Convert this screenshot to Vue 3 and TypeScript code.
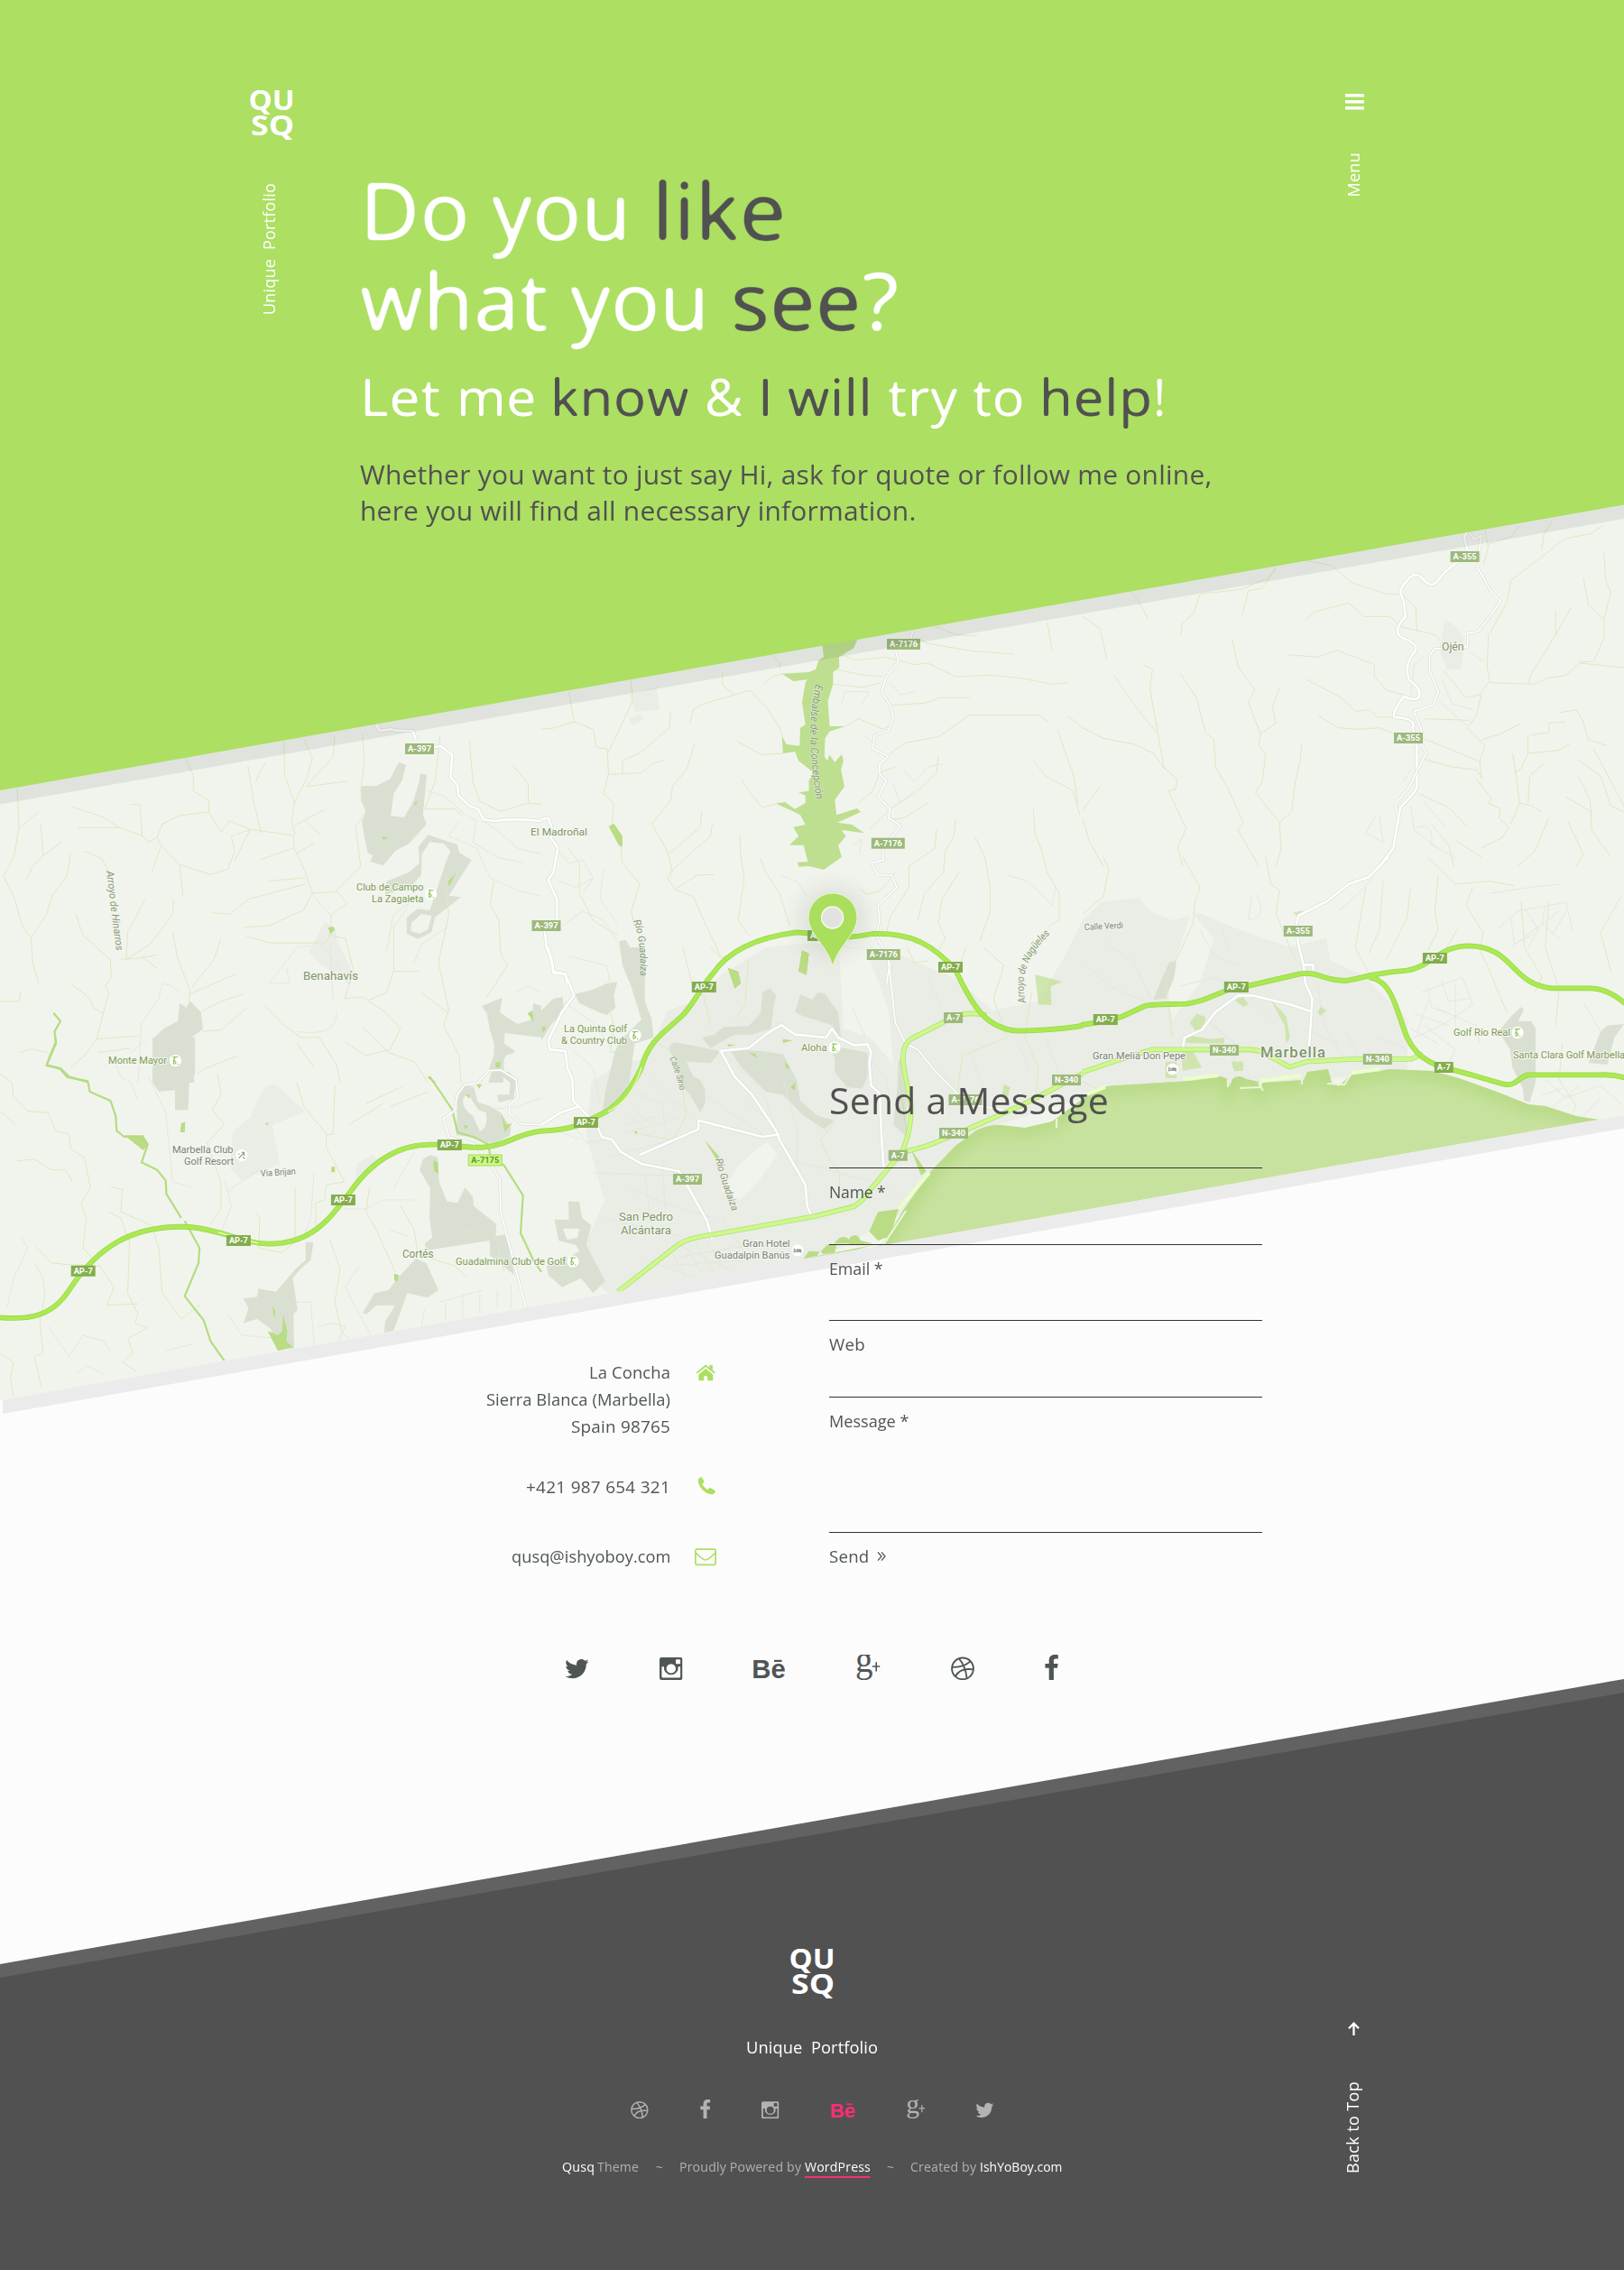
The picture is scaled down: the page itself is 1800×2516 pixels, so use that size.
<script setup lang="ts">
type Word = { t: string; w: number; dark?: boolean }
type Badge = { x: number; y: number; t: string; kind: 'major' | 'minor' | 'pale' }
type Label = { x: number; y: number; w: number; t: string; s?: number; r?: number; c?: string }

// Fills the given measure with a run of text: part tracking, part glyph width.
const vFit = {
  mounted(el: HTMLElement, binding: { value: number }) {
    const box = el.getBoundingClientRect()
    const upright = el.classList.contains('upright')
    const natural = upright ? box.height : box.width
    const count = (el.textContent ?? '').length
    const delta = binding.value - natural
    if (upright) {
      el.style.letterSpacing = `${(delta / count).toFixed(3)}px`
      return
    }
    const tracked = natural + delta * 0.35
    el.style.letterSpacing = `${((delta * 0.35) / count).toFixed(3)}px`
    el.style.transform = `scaleX(${(binding.value / tracked).toFixed(4)})`
    el.style.marginRight = `${(binding.value - tracked).toFixed(2)}px`
  },
}

const headline: Word[][] = [
  [{ t: 'Do ', w: 146.5 }, { t: 'you ', w: 178 }, { t: 'like', w: 149, dark: true }],
  [{ t: 'what ', w: 233.5 }, { t: 'you ', w: 178 }, { t: 'see', w: 145, dark: true }, { t: '?', w: 43 }],
]
const subline: Word[] = [
  { t: 'Let ', w: 106.5 }, { t: 'me ', w: 105 }, { t: 'know ', w: 171, dark: true }, { t: '& ', w: 58.5 },
  { t: 'I ', w: 33.5, dark: true }, { t: 'will ', w: 110.5, dark: true }, { t: 'try ', w: 94 },
  { t: 'to ', w: 74, dark: false }, { t: 'help', w: 126, dark: true }, { t: '!', w: 14 },
]

const fields = [
  { t: 'Name *', w: 62.5, h: 85 },
  { t: 'Email *', w: 59.5, h: 84 },
  { t: 'Web', w: 40, h: 85 },
  { t: 'Message *', w: 88.5, h: 150 },
]

const social = ['twitter', 'instagram', 'behance', 'gplus', 'dribbble', 'facebook']
const footerSocial = ['dribbble', 'facebook', 'instagram', 'behance', 'gplus', 'twitter']
const iconBox: Record<string, number> = {
  twitter: 25.5, instagram: 25.5, behance: 35, gplus: 26.5, dribbble: 26, facebook: 15,
}

const badges: Badge[] = [
  { x: 465, y: 830, t: 'A-397', kind: 'minor' }, { x: 605.5, y: 1026, t: 'A-397', kind: 'minor' },
  { x: 762, y: 1307, t: 'A-397', kind: 'minor' }, { x: 1001.5, y: 714, t: 'A-7176', kind: 'minor' },
  { x: 984.3, y: 934.7, t: 'A-7176', kind: 'minor' }, { x: 979.3, y: 1058, t: 'A-7176', kind: 'minor' },
  { x: 1070, y: 1219, t: 'A-7176', kind: 'minor' }, { x: 92.2, y: 1408.7, t: 'AP-7', kind: 'major' },
  { x: 264.4, y: 1375, t: 'AP-7', kind: 'major' }, { x: 380.4, y: 1330, t: 'AP-7', kind: 'major' },
  { x: 498.3, y: 1269, t: 'AP-7', kind: 'major' }, { x: 908.5, y: 1037, t: 'AP-7', kind: 'major' },
  { x: 1053.5, y: 1072, t: 'AP-7', kind: 'major' }, { x: 780.3, y: 1094, t: 'AP-7', kind: 'major' },
  { x: 649.4, y: 1244, t: 'AP-7', kind: 'major' }, { x: 1225.3, y: 1130, t: 'AP-7', kind: 'major' },
  { x: 1370.3, y: 1094, t: 'AP-7', kind: 'major' }, { x: 1590.4, y: 1062, t: 'AP-7', kind: 'major' },
  { x: 1056.6, y: 1128, t: 'A-7', kind: 'minor' }, { x: 995.3, y: 1280.7, t: 'A-7', kind: 'minor' },
  { x: 1600.3, y: 1183, t: 'A-7', kind: 'major' }, { x: 1182, y: 1197, t: 'N-340', kind: 'minor' },
  { x: 1057, y: 1256, t: 'N-340', kind: 'minor' }, { x: 1357, y: 1164, t: 'N-340', kind: 'minor' },
  { x: 1526.8, y: 1174, t: 'N-340', kind: 'minor' }, { x: 1623.6, y: 617, t: 'A-355', kind: 'minor' },
  { x: 1561, y: 818, t: 'A-355', kind: 'minor' }, { x: 1438.8, y: 1032, t: 'A-355', kind: 'minor' },
  { x: 537.7, y: 1286, t: 'A-7175', kind: 'pale' },
]
const badgeWidth = (t: string) => ({ 3: 21, 4: 27, 5: 32, 6: 37 } as Record<number, number>)[t.length]

const labels: Label[] = [
  { x: 588, y: 926, w: 63, t: 'El Madroñal' },
  { x: 336, y: 1085.7, w: 61, t: 'Benahavís', s: 13 },
  { x: 395, y: 986.7, w: 74.5, t: 'Club de Campo', c: 'olive' },
  { x: 412, y: 1000, w: 57.5, t: 'La Zagaleta', c: 'olive' },
  { x: 120, y: 1179.3, w: 65, t: 'Monte Mayor', c: 'olive' },
  { x: 191, y: 1278, w: 67.5, t: 'Marbella Club', c: 'grey' },
  { x: 204, y: 1291, w: 55, t: 'Golf Resort', c: 'grey' },
  { x: 289, y: 1304, w: 39, t: 'Via Brijan', s: 10, r: -4, c: 'grey' },
  { x: 446, y: 1394, w: 34.5, t: 'Cortés', s: 12.5 },
  { x: 505, y: 1401.7, w: 122, t: 'Guadalmina Club de Golf', c: 'olive' },
  { x: 686, y: 1352.7, w: 60, t: 'San Pedro', s: 13 },
  { x: 688, y: 1367.7, w: 56, t: 'Alcántara', s: 13 },
  { x: 823, y: 1381.7, w: 52.5, t: 'Gran Hotel', c: 'grey' },
  { x: 792, y: 1395, w: 83.5, t: 'Guadalpín Banús', c: 'grey' },
  { x: 625, y: 1144, w: 70, t: 'La Quinta Golf', c: 'olive' },
  { x: 622, y: 1157, w: 73, t: '& Country Club', c: 'olive' },
  { x: 888, y: 1165, w: 28.5, t: 'Aloha', c: 'olive' },
  { x: 1598, y: 720.7, w: 24.5, t: 'Ojén', s: 12.5 },
  { x: 1202, y: 1031, w: 43, t: 'Calle Verdi', s: 10, r: -3, c: 'grey' },
  { x: 1211, y: 1173.7, w: 103, t: 'Gran Meliá Don Pepe', c: 'grey' },
  { x: 1397, y: 1171.7, w: 73, t: 'Marbella', s: 16.5, c: 'city' },
  { x: 1611, y: 1147.7, w: 63, t: 'Golf Río Real', c: 'olive' },
  { x: 1677, y: 1172.7, w: 124, t: 'Santa Clara Golf Marbella', c: 'olive' },
]
const curved = [
  { id: 'hin', d: 'M118 966 Q122 1000 130 1062', t: 'Arroyo de Hinarros', w: 89, s: 11.5 },
  { id: 'emb', d: 'M904 758 C895 800 897 840 906 892', t: 'Embalse de la Concepción', w: 129, s: 12 },
  { id: 'gua', d: 'M702 1021 Q712 1045 709 1090', t: 'Río Guadaiza', w: 62, s: 11 },
  { id: 'gub', d: 'M793 1285 Q801 1315 814 1349', t: 'Río Guadaiza', w: 61, s: 11 },
  { id: 'sir', d: 'M742 1173 Q750 1190 755 1215', t: 'Calle Sirio', w: 38, s: 10 },
  { id: 'nag', d: 'M1137 1111 C1130 1080 1139 1056 1169 1031', t: 'Arroyo de Nagüeles', w: 85, s: 11.5 },
]
const flags = [[477.6, 990.7], [194.4, 1175.5], [635, 1398], [704, 1147.5], [925, 1161], [1682, 1144.5]]
const hotels = [[884, 1386], [1299.5, 1185]]
</script>

<template>
  <div class="page">
    <svg class="defs" width="0" height="0" aria-hidden="true">
      <defs>
        <filter id="soften" x="-2%" y="-5%" width="104%" height="110%" color-interpolation-filters="sRGB">
          <feGaussianBlur stdDeviation="2" result="b" />
          <feComponentTransfer in="b"><feFuncA type="linear" slope="4.5" intercept="-1.6" /></feComponentTransfer>
        </filter>
        <filter id="soften-small" x="-2%" y="-5%" width="104%" height="110%" color-interpolation-filters="sRGB">
          <feGaussianBlur stdDeviation="1.2" result="b" />
          <feComponentTransfer in="b"><feFuncA type="linear" slope="3.2" intercept="-1" /></feComponentTransfer>
        </filter>
        <symbol id="twitter" viewBox="0 0 25.5 28">
          <path transform="translate(-.7 2.6) scale(1.09)" d="M23.954 4.569c-.885.389-1.83.654-2.825.775 1.014-.611 1.794-1.574 2.163-2.723-.951.555-2.005.959-3.127 1.184-.896-.959-2.173-1.559-3.591-1.559-2.717 0-4.92 2.203-4.92 4.917 0 .39.045.765.127 1.124C7.691 8.094 4.066 6.13 1.64 3.161c-.427.722-.666 1.561-.666 2.475 0 1.71.87 3.213 2.188 4.096-.807-.026-1.566-.248-2.228-.616v.061c0 2.385 1.693 4.374 3.946 4.827-.413.111-.849.171-1.296.171-.314 0-.615-.03-.916-.086.631 1.953 2.445 3.377 4.604 3.417-1.68 1.319-3.809 2.105-6.102 2.105-.39 0-.779-.023-1.17-.067 2.189 1.394 4.768 2.209 7.557 2.209 9.054 0 13.999-7.496 13.999-13.986 0-.209 0-.42-.015-.63.961-.689 1.8-1.56 2.46-2.548z" />
        </symbol>
        <symbol id="instagram" viewBox="0 0 25.5 28">
          <path fill-rule="evenodd" d="M2.2 3H23.3Q25.5 3 25.5 5.2V25.8Q25.5 28 23.3 28H2.2Q0 28 0 25.8V5.2Q0 3 2.2 3ZM2.4 13.2V24.6Q2.4 25.6 3.4 25.6H22.1Q23.1 25.6 23.1 24.6V13.2H20.6A7.9 7.9 0 1 1 5 13.2ZM12.8 10.2A5.2 5.2 0 1 0 12.8 20.6 5.2 5.2 0 1 0 12.8 10.2ZM18.8 5.2Q18 5.2 18 6V9.4Q18 10.2 18.8 10.2H22.3Q23.1 10.2 23.1 9.4V6Q23.1 5.2 22.3 5.2Z" />
        </symbol>
        <symbol id="behance" viewBox="0 0 35 28">
          <text x="-1.8" y="25.9" font-family="'Liberation Sans', sans-serif" font-weight="700" font-size="30" textLength="37.5" lengthAdjust="spacingAndGlyphs">Be</text>
          <rect x="23" y="5.8" width="8.6" height="2.2" />
        </symbol>
        <symbol id="gplus" viewBox="0 0 26.5 28">
          <text x="-1" y="19.4" font-family="'Liberation Serif', serif" font-size="40" textLength="19.5" lengthAdjust="spacingAndGlyphs">g</text>
          <path d="M17.8 12.2h8.8v1.6h-8.8zM21.4 8.3H23V18.6H21.4z" />
        </symbol>
        <symbol id="dribbble" viewBox="0 0 26 28">
          <g fill="none" stroke="currentColor" stroke-width="1.9">
            <circle cx="13" cy="15.4" r="11.9" />
            <path d="M9 4.6Q16 12 17.6 26M1.4 13.8Q14 14.4 21.5 7.4M5 24Q10 14.2 24.6 16.4" />
          </g>
        </symbol>
        <symbol id="facebook" viewBox="0 0 15 28">
          <path d="M14.8.2V4.6H12.2C10.3 4.6 9.9 5.5 9.9 6.9V9.9H14.6L14 14.7H9.9V28H4.7V14.7H.4V9.9H4.7V6.3C4.7 2.2 7.2 0 10.9 0 12.7 0 14.2.1 14.8.2Z" />
        </symbol>
      </defs>
    </svg>

    <svg class="backdrop" viewBox="0 0 1800 2516" aria-hidden="true">
      <defs>
        <clipPath id="mapclip"><path d="M0 800V1552L1800 1236V540Z" /></clipPath>
        <filter id="blur" x="-50%" y="-50%" width="200%" height="200%"><feGaussianBlur stdDeviation="13" /></filter>
        <filter id="inner"><feGaussianBlur stdDeviation="9" /></filter>
        <clipPath id="seaclip"><use href="#sea" /></clipPath>
        <path id="sea" d="M940 1400L979 1378 1002 1340 1032 1298 1059 1270 1082 1253Q1095 1246 1109 1247L1136 1250 1166 1243 1200 1218Q1218 1203 1238 1203L1320 1198 1353 1193 1361 1196 1363 1204 1366 1196Q1373 1190 1381 1196L1395 1199 1396 1206 1400 1200 1445 1197 1449 1188 1472 1185 1476 1200 1484 1204 1496 1192 1541 1185 1587 1187 1617 1195 1659 1210 1694 1224 1713 1226 1747 1237 1772 1241 1772 1300 1300 1420Z" />
      </defs>

      <g clip-path="url(#mapclip)">
        <rect y="540" width="1800" height="1020" fill="#f1f4ed" />

        <g class="urban">
          <path d="M650 1260L655 1200 690 1175 715 1175 740 1120 770 1110 800 1080 850 1050 900 1045 990 1055 1060 1085 1100 1120 1150 1110 1180 1060 1200 1020 1220 1000 1262 995 1275 1010 1300 1020 1330 1012 1360 1025 1400 1040 1430 1050 1470 1040 1475 1065 1510 1080 1560 1130 1560 1185 1440 1200 1240 1205 1080 1255 1000 1345 900 1400 690 1450 640 1400 670 1330Z" />
          <path d="M342 1055L360 1022 372 1030 374 1043 392 1080 388 1092 355 1068ZM290 1210Q302 1192 316 1212L338 1232 290 1252 277 1240ZM275 1240L300 1235 310 1290 268 1308 255 1295 258 1255ZM395 1290L412 1280 420 1286 394 1312Z" />
          <path d="M698 770L728 761 731 787 704 789ZM697 797L710 790 714 797 702 804ZM1602 687Q1612 690 1623 707L1620 742 1604 742 1595 720Z" />
        </g>
        <g fill="#f1f4ed">
          <path d="M820 1290L850 1265 862 1280 840 1310 820 1330 800 1320ZM930 1050L960 1052 985 1120 990 1180 965 1150 935 1140ZM1320 1010L1345 1040 1330 1090 1300 1130 1292 1100Z" />
        </g>

        <g class="golf">
          <g transform="translate(0 800) scale(.38265 .33333)">
            <path d="M1045 213L1090 213 1130 190 1155 135 1176 143 1165 195 1140 240 1132 312 1170 318 1197 265 1214 200 1217 172 1236 177 1225 310 1236 340 1185 405 1145 430 1110 478 1072 465 1080 445 1065 435 1055 380 1048 330 1060 300 1045 260Z" />
            <path fill-rule="evenodd" d="M1240 376L1325 408 1330 435 1366 460 1300 578 1335 583 1260 650 1250 700 1210 722 1178 705 1178 650 1210 622 1245 627 1295 455 1305 430 1285 405 1245 400 1222 440 1220 510 1190 548 1115 575 1120 530 1185 500 1215 470 1212 415ZM1250 645L1220 640 1192 668 1190 695 1215 705 1240 690Z" />
            <path d="M550 928L582 965 588 1022 554 1050 563 1200H442L448 1048 475 1020 515 995 520 935 540 950ZM1395 945L1455 917 1448 965 1470 985 1500 1005 1540 990 1545 935 1568 945V1050L1462 1035 1460 1070 1492 1095 1460 1110 1458 1200H1415L1440 1100 1420 1030 1410 970Z" />
          </g>
          <g transform="translate(0 1150) scale(.38265 .33333)">
            <path d="M442 0H565V120L548 150 545 240 507 242V175L460 180 442 150ZM705 868L745 862 748 835 800 845 855 770 885 740V680L908 680 900 740 870 770 848 800 862 905 850 920 852 1035 800 1030 785 970 745 935 705 950 720 900ZM1215 440L1225 405 1245 390 1268 398 1272 480 1295 545 1325 550 1347 498 1370 530 1372 560 1438 620 1436 660 1467 655 1490 790 1420 725 1418 675 1235 708 1230 685 1252 665 1244 600 1246 500ZM1050 915L1085 850 1125 840 1160 790 1205 735 1235 750 1270 840 1238 865 1180 850 1140 975 1113 982 1115 945 1145 890 1090 890 1062 920Z" />
            <path fill-rule="evenodd" d="M1325 210L1340 155 1372 165 1385 215 1420 228 1450 250 1480 300 1478 325 1430 355 1370 330 1322 325ZM1345 195Q1330 230 1370 260L1390 312Q1415 300 1408 250L1385 240 1360 195ZM1415 110L1475 115 1495 140 1488 205 1445 215 1440 190 1475 190 1478 150 1450 125Z" />
            <path d="M1432 0H1460L1462 30 1492 50 1465 60 1445 110 1415 110 1430 60Z" />
          </g>
          <g transform="translate(600 1050) scale(.38265 .33333)">
            <path d="M0 210L35 170 62 165 65 215 30 255 0 310ZM97 155L150 140 190 120 220 115 210 160 215 200 190 225 165 215 110 185ZM228 0H300L300 180 320 240 325 300 270 320 255 450 210 545 178 540 185 480 212 350 228 310 290 240 260 130 235 60ZM370 330L385 315 520 345 490 385 420 380 440 430 460 440 475 475V520L460 548 430 490 400 450 395 410ZM465 300L500 290 530 265 600 262 635 220 640 150 662 135 680 160 672 200 665 270 610 290 560 290 490 335ZM545 340L640 345 700 355 740 440 750 510 800 560 850 575 820 605 760 560 700 490 650 480 580 400ZM735 215L750 155 785 175 800 150 822 155 860 215 868 300 850 285 845 260 790 240 760 230ZM830 325L945 350 945 430 930 470 885 465 850 415 850 370ZM1035 370L1060 400 1058 630 1020 590 1030 480Z" />
            <path fill-rule="evenodd" d="M78 845L110 845 118 900 145 925 130 990 185 1110 150 1150 115 1100 60 1130 20 1090 15 1060 80 1030 110 1010 100 990 50 975 38 905 80 905ZM62 935L75 972 105 965 110 935Z" />
          </g>
          <g transform="translate(600 690) scale(.38265 .33333)">
            <path d="M225 1060L245 1055 270 1110 290 1130 300 1200H260L235 1130Z" />
          </g>
          <g transform="translate(1200 950) scale(.38265 .33333)">
            <path d="M250 350L272 345 265 400 240 470 205 475 220 430ZM1240 530L1270 498 1278 508 1262 545 1300 545 1312 570 1312 750 1295 815 1278 810 1275 770 1245 700 1238 640 1205 580ZM1500 580L1520 560 1568 555 1540 600 1520 690 1465 685Z" />
          </g>
        </g>

        <g class="streams">
          <g transform="translate(0 800) scale(.38265 .33333)">
            <path d="M50 225L55 350 40 450 10 515 40 580 65 680 90 720 95 800 112 870M55 355L110 300M118 340L125 445 95 480 75 530M125 445L178 400M204 438L195 510 150 580 135 640 90 718M210 283L300 318 345 352 410 378 430 400 455 385 470 340 520 312 605 300 605 262 560 230 560 180 535 110M225 352L345 352M378 275L405 275 412 380M455 385L467 412 520 475 610 508 660 490 680 430 670 380 725 358 680 460M467 412L440 500M520 475L530 580M605 300L640 365 665 330 725 358 850 378 852 420 885 500 905 570 978 565 1005 605 960 640 955 710 1000 720 1025 830 998 920M718 145L735 270 758 372M768 135L740 200M822 65L825 180 853 268 845 330 855 375M880 55L905 120 888 190 853 268M970 45L965 115 888 215 1005 198M853 345L940 292M885 330L928 375M860 438L910 402M755 458L850 420M778 530L885 518M615 635L665 640 720 590 800 565 885 540M708 683L780 678 880 625 905 570M712 712L780 735 895 735 945 735 955 710M1050 40L1055 140 1045 230 1060 300 1030 350 1045 480 975 560M1360 65L1370 200 1390 265 1450 298 1530 270 1568 275M1485 145L1530 205 1530 270M1275 45L1260 200 1230 290 1320 290 1340 315M245 430L295 455 320 510M220 640L240 710 320 790 322 850 305 880 315 900 280 1055 245 1110 205 1150M420 590L370 700 365 790 435 740 500 640 503 590M350 790L410 785 455 775M410 780L455 820M500 700L515 790 550 890 548 930M640 720L620 790 555 885M550 905L685 838M582 965L640 930 705 905M588 1030L640 1025 715 950M205 870L260 920 270 950 300 970M280 1055L400 1045M285 1100L380 1085M0 930L55 930 60 895M55 1100L90 1088 140 1100M768 945L825 1010 870 1050 925 1050 975 1140 985 1200M860 1070L910 1150M1050 1015L1125 1100 1200 1130 1240 1200M998 920L1050 915 1110 960 1160 1020 1130 1090 1060 1110 1000 1065M1140 830L1215 830M1180 620L1140 680 1140 830 1120 900 1070 925M1290 550L1300 640 1270 800 1300 960 1285 1010 1330 1110 1335 1200M1430 530L1420 610 1445 660 1450 770 1470 810 1410 915M1220 900L1300 970" />
          </g>
          <g transform="translate(0 1150) scale(.38265 .33333)">
            <path d="M0 120L35 150 38 195 80 245 140 250 160 310 200 320 205 370 245 400 262 500 235 550 250 600 240 700 280 750M0 245L45 290M50 410L100 405 150 440 190 440 210 480M315 580L350 600 375 680 370 850 400 920 390 950 430 965 370 1000 385 1050 355 1080 395 1110M103 755L125 800 130 860 115 940 125 1050 100 1060 120 1165M102 695L150 750 200 755 290 760 330 830 310 890 400 885M320 495L355 505 350 580 440 625 460 700 470 850 525 935 580 890M630 120L640 190 615 240 650 290 600 350 640 480 640 570 610 620M860 150L880 230 945 320 945 365 998 480 945 490 940 540 915 550V630M970 160L965 320 945 325M690 60L600 100 570 120M0 1050L40 1080 30 1130 40 1195M740 580L752 600 750 700 815 715 855 680 855 500M955 670L985 770 970 880 990 980 1010 1000M1070 500L1060 580 1090 640 1145 780M1160 560L1200 640 1210 720 1320 760 1355 800M1130 230L1240 180M1060 220L1170 160M1010 290L1110 220" />
          </g>
          <g transform="translate(600 690) scale(.38265 .33333)">
            <path d="M0 355L40 350 95 330 150 355 160 415 190 420 195 500 180 570 210 600 205 670M80 230L95 330M260 190L265 260 240 320 220 370 190 440M525 165V210L560 240 605 225 650 280 690 350 700 380M560 240L470 270 440 290 430 335M445 400L420 490 380 545 375 590 320 670 365 760 380 830 365 850 390 890 440 910 470 990 520 1110M465 630L460 680 370 770M495 670L490 710 420 780 370 835M500 838L450 840 390 885M375 295L370 350 290 430 235 460V500M355 458L320 470 290 500 195 505M567 395L640 440 700 435M580 520L600 560 640 615 690 600M575 705L578 780 588 850 570 990 600 1040M635 785L650 830 690 900 720 1010M230 745L235 800 285 870 260 960 270 1010M75 745L110 800 110 900 150 990 220 1040M865 105L910 125 1000 115 1080 140 1120 135 1200 180 1300 175 1390 185 1480 205 1525 200M1085 50L1120 70 1250 95 1370 105M850 155L935 175 990 180M845 205L930 215 985 200M1010 275L1110 268 1155 250 1240 250M880 345L920 320 990 355 1010 340M1010 435L1055 400 1150 380 1200 340 1240 308 1440 308 1468 330M1425 460L1460 510 1540 560 1560 640M1495 355L1520 440 1540 500 1555 600M1425 620L1430 700 1450 760 1465 830 1500 900V990L1470 1010M1255 710L1285 780 1300 880 1300 960 1270 1060M1200 655L1195 710 1170 760 1165 830 1110 900 1090 990M1145 685L1140 750 1065 810 1065 880 1010 980 1000 1030M1210 830L1160 920 1150 1000 1170 1050 1150 1090M925 885L940 905 985 890 1025 830M1025 480L980 500 960 560 920 600M1150 445L1145 500 1080 570 1010 620 950 690M1120 600L1050 650 1010 655M1465 0L1480 95M1135 10L1200 40 1260 45M665 100L690 135 690 155M645 205L670 180 700 170M1525 310L1568 350" />
          </g>
          <g transform="translate(600 1050) scale(.38265 .33333)">
            <path d="M410 0L440 140 470 160 490 260M490 0L520 35 560 20M560 240L590 190 600 40M190 170L210 260 200 350 270 330M340 320L370 340 400 400 420 560 380 640 280 620M850 580L810 640 830 700 865 750 860 830M1060 0L1080 50 1120 45M1200 100L1230 0M1280 0L1340 60 1310 170 1350 300 1220 360 1205 480M1420 150L1400 300 1440 400 1430 520" />
          </g>
          <g transform="translate(1200 540) scale(.38265 .33333)">
            <path d="M0 430L50 470 70 570M135 345L160 375 190 440M285 490L288 455 320 420 340 355 460 340 540 300 560 265M462 425L480 345 520 335 560 270M650 245L720 260 780 318 880 355 920 355M645 442L670 415 770 385 815 430 890 430 925 465 1020 490 1035 510M595 557L680 565 735 542 790 565 845 590 845 630 880 675 930 690M645 638L750 700 790 745 830 740 855 765 900 765M683 760L740 800 800 805 860 800 910 825M433 505L450 595 498 675 480 715 515 820 510 860 530 890 520 980 500 1015 570 1115 575 1200 560 1260M570 665L550 730 560 785 515 820M635 850L630 910 615 985 605 1080 570 1115M283 620L330 700 355 815 380 840 385 930 420 1000 465 1115 450 1140 510 1260M175 590L202 605 195 670 215 800 235 930 272 970 270 1005 248 1010 300 1135 275 1200 290 1260M90 625L160 740 215 815M0 800L60 835 150 855 205 885 240 940M0 1075L50 995M0 1100L20 1180 60 1260M930 360L965 400 968 480M1045 610L1110 700 1150 690 1175 650M1175 490L1172 600 1180 650 1310 655 1345 635 1400 625 1440 585 1568 600M1290 650L1300 620 1365 500 1415 400M1370 410V490M1180 485L1230 380 1240 310 1320 240 1400 170 1470 155 1510 125M1330 210L1335 160 1360 110M1165 140L1175 200 1160 260M1175 190L1240 165 1265 130M1155 690L1140 760 1115 800 1165 860 1150 910 1155 970M1155 840L1210 820 1270 785M985 835L1040 860 1145 910M1140 970L1185 1035 1175 1050 1210 1070 1205 1100 1235 1130 1215 1165 1155 1200M990 905L1070 930 1140 940 1160 970M1120 775L990 770M1245 885L1255 950 1265 1050 1300 1060 1330 1080M1290 1050L1295 960 1335 920M1240 1120L1265 1050M1290 825L1290 885 1270 935 1250 950M1295 825L1350 815 1350 785 1400 780M1290 885L1380 875 1410 855M1380 750L1430 740 1450 780 1465 840 1520 860M1450 300L1465 390 1510 440 1510 500 1480 580 1440 580M1510 215L1515 310 1530 350 1510 440M1435 905L1500 960 1530 1060 1568 1080M1435 960L1470 1040 1475 1140 1530 1230M1400 1030L1475 1080M1405 1110L1450 1220 1430 1260M1010 1120L1060 1190 1075 1260M975 1020L1060 1065 1115 1130M1080 1175L1155 1230M1350 1100L1310 1210 1260 1260M1480 870L1540 1000 1568 1060" />
          </g>
          <g transform="translate(1200 950) scale(.38265 .33333)">
            <path d="M60 0L75 40 60 130 0 190M290 0L340 100 325 150 320 220 280 320 240 400 260 600M530 0L545 90 570 110 560 190 600 300 620 350M820 100L790 300 830 390M870 80L860 240 830 320M950 100L940 200 880 340M1030 60L1020 180 1030 240 1000 310M1085 240L1040 330M1130 100L1110 160 1160 250 1150 310 1180 380 1200 440 1230 520M1270 150L1280 300 1330 400 1310 450M1350 150L1340 300 1380 440 1370 560M1560 130L1500 250 1530 380" />
            <path d="M1000 0L1080 90 1180 80 1250 95M1390 620L1380 740 1430 830 1420 850M0 745L40 770" />
          </g>
        </g>

        <g class="lanes">
          <g transform="translate(0 800) scale(.38265 .33333)">
            <path d="M905 575L955 640M955 740L965 930M930 740L990 830M780 870L860 750 900 745M830 820L840 870 780 870M1240 230L1290 250 1350 310 1380 330 1370 400 1440 450 1520 470M1330 330L1300 380 1380 420 1420 520 1500 560 1568 580M1400 330L1450 370 1500 420 1568 440M1120 760L1140 640 1190 600M1200 800L1220 740 1300 680M1490 900L1530 880 1568 900M400 1200L410 1000 460 920 470 870 500 880 520 900M380 1100L420 1060M860 1030Q980 1050 975 960" />
          </g>
          <g transform="translate(0 1150) scale(.38265 .33333)">
            <path d="M300 100L330 70 350 130 380 150 400 210M430 130L480 250 500 480 560 500M650 470L670 560 640 650M660 510L750 440M910 450L900 600 880 660M140 960L200 1060 240 990 300 1010 320 1040M220 1120L250 1090 300 1120M660 920L700 990 800 1000M480 1040L560 1020M860 880L900 880 910 1020M920 960L960 950 1000 960 960 1070M1000 570L1060 570 1110 540 1200 540M1130 640L1180 660M1400 240L1500 230 1568 200M1040 760L1000 830 1030 900 1080 1000M1300 600L1380 660M1200 380L1160 460 1140 500M1440 690L1460 780M20 900L40 800 80 700 60 660M1270 880L1400 840M1290 940L1290 880M1340 930L1340 850M1390 920V850M1440 900V840M1220 960L1230 900M1480 900V820" />
          </g>
          <g transform="translate(600 690) scale(.38265 .33333)">
            <path d="M870 270L880 230 950 230 930 270M1010 200L1040 240 1080 230M930 370L960 400M1050 490L1080 530 1120 480 1165 470M1020 540L1040 600 1080 560M690 840L740 860 770 910M900 740L930 720 920 770M50 760L80 800 120 790 150 850 120 900M50 860L100 880 150 850M180 820L170 920 220 1000M60 1010L120 960 180 990 220 1060M1350 840L1410 860 1480 940 1490 880" />
          </g>
          <g transform="translate(600 1050) scale(.38265 .33333)">
            <path d="M80 30L190 60 200 130M60 180L150 250 200 330M90 340L150 400 170 520M280 400L370 500 440 560M270 480L350 520 360 610M240 620L390 570M190 700L380 640M150 750L400 760M250 800L380 860 500 900M300 750L320 950M180 900L400 960M350 700L360 900M520 900L600 1030M400 990L560 1080M300 1040L450 1100M540 360L640 480 680 600M700 440L740 600 740 760M640 560L600 520M460 480L560 560 640 620M900 200L940 300M960 380L1000 440 1010 520M1080 340L1160 420 1200 460M1120 100L1160 200M1240 340L1290 500M1380 320L1420 420M1460 300L1500 420M700 700L960 780M850 780L900 860M1000 790L1040 840" />
            <path d="M420 1000L470 1090M450 990L500 1080M480 980L530 1070M380 1020L420 1100M400 1030L600 990M360 1060L580 1040M250 560L300 600M270 540L320 590M240 590L340 560M80 570L130 650 200 640M30 600L110 640" />
          </g>
          <g transform="translate(1200 540) scale(.38265 .33333)">
            <path d="M950 700L960 590 990 560M1125 550L1160 580M1040 640L1070 720 1130 740M1030 710L1080 760 1110 790M950 940L930 980M950 1060L960 1140 1030 1200M985 1040L1050 1130M850 1090L820 1150 870 1180 860 1090M970 1130Q1020 1120 1010 1190L1080 1230" />
          </g>
          <g transform="translate(1200 950) scale(.38265 .33333)">
            <path d="M340 240L380 330 460 360M400 220L420 300M0 350L80 430 200 490M60 280L150 350 200 480M280 430L380 400 460 430M330 520L420 600M360 540L440 620 440 700M480 460L560 560M640 570L740 620M680 420L700 560 760 670M760 580L800 660M860 600L940 640M980 450L1100 400 1130 490 1040 560 960 600M1020 500L1140 560 1150 620M990 560L1080 640 1060 690M1200 240L1260 180 1400 150 1420 250M1240 300L1380 180M1180 120L1300 100 1380 90M1340 740L1400 800 1500 760 1560 820M1360 830L1440 760M1450 860L1500 800M1330 790L1390 770M500 120Q540 200 480 210L490 130M740 180L800 120 840 70M1450 480L1500 580" />
            <path d="M1000 430L1010 500 1060 520M1040 410L1060 480 1120 470M1080 420L1080 560M960 520L1060 560M950 570L1030 620M1000 480L970 580M1240 200L1250 290 1300 260M1280 170L1320 240 1290 300M1340 160L1330 220 1380 270M1400 180L1360 260" />
          </g>
        </g>

        <!-- reservoir, river stretches and parks -->
        <g class="water">
          <g transform="translate(600 690) scale(.38265 .33333)">
            <path fill="#bddf8f" d="M812 60L918 50 905 85 862 115 863 150 845 165V205L830 260 835 345 880 345 835 362 822 385 820 445 828 460 835 440 850 465 870 438 875 460 868 490 878 545 850 590 855 640 915 618 925 630 858 665 900 672 935 700 870 690 882 710 860 740 870 780 818 822 775 810 745 812 742 797 772 795 765 765 760 740 718 740 745 710 730 680 765 672 750 640 715 620 680 602 705 597 735 620 765 600 765 575 745 565 775 560 775 525 790 500 745 460 735 430 700 435 697 378 710 405 748 410 750 350 765 340 755 265 765 200 770 190 730 195 697 170 775 165 795 155 803 125 818 115Z" />
            <path d="M195 678L210 668 235 710 235 745 225 742ZM755 1090L775 1100 768 1170 745 1160ZM540 1148L570 1160 578 1200H560Z" />
          </g>
          <g transform="translate(600 1050) scale(.38265 .33333)">
            <path d="M755 10L775 20 768 92 745 80ZM540 68L570 80 578 120 560 138ZM540 322L562 325 540 330ZM700 305L728 310 700 318ZM600 350L620 355 625 370ZM705 380L720 400 710 405ZM735 450L722 465 735 478ZM472 640L515 695 510 710ZM270 610L280 615 272 622ZM1070 670L1115 745 1100 758ZM1035 380L1058 630 1050 560 1042 470ZM0 265L15 265 5 285Z" />
            <path opacity=".6" d="M1430 90L1510 115 1475 130 1478 192 1440 190ZM1340 455L1358 465 1350 500 1335 490Z" />
            <path d="M760 1035L775 1010 805 1012 800 1025ZM810 1010L830 988 855 990 850 1015 815 1020ZM848 985Q870 950 890 970L895 985ZM893 965Q915 945 925 975L960 985 890 990ZM950 945L975 880 1035 870 1010 960 975 975ZM740 1040L960 990 900 1010Z" />
          </g>
          <g transform="translate(0 800) scale(.38265 .33333)">
            <path d="M1200 270L1210 262 1204 280ZM1105 382L1125 385 1110 392ZM1320 505L1300 548 1298 530ZM950 685L965 680 970 692 958 706ZM1528 970L1542 960 1545 998ZM1435 1135L1450 1130 1448 1150 1436 1150Z" />
          </g>
          <g transform="translate(0 1150) scale(.38265 .33333)">
            <path d="M525 285L537 280 535 315 522 315ZM1452 250L1465 290 1484 285 1462 315ZM1380 155L1396 155 1388 170ZM1342 290L1355 295 1350 305ZM1255 408L1268 415 1270 452 1258 445ZM775 975L805 990 818 975 820 920 832 975 830 1010 848 1030 805 1042ZM788 895L798 910 795 935ZM1142 785L1156 790 1150 812 1142 808ZM960 430H970V448H960ZM1350 188L1362 192 1358 204ZM768 285L778 283 774 292ZM360 325L415 325 430 355 415 375Z" />
          </g>
          <g transform="translate(1200 950) scale(.38265 .33333)" opacity=".55">
            <path d="M310 550L330 522 355 530 350 575 325 575ZM295 590L370 605 410 600 410 620 300 618ZM545 475L590 530 600 600 590 620 585 560ZM440 475L465 465 480 490 465 498ZM690 497L706 510 688 528 680 515ZM430 680L465 680 465 710 440 712ZM240 680H272V735H240ZM610 185L635 178 640 190 620 195ZM285 650L320 645 345 700 290 710Z" />
          </g>
        </g>
        <g class="river">
          <g transform="translate(0 800) scale(.38265 .33333)"><path d="M155 968L175 995 158 1030 162 1065 145 1110 135 1142 175 1155 195 1182 255 1195M1240 1180L1260 1200" /></g>
          <g transform="translate(0 1150) scale(.38265 .33333)">
            <path d="M160 0L162 20 135 92 175 102 200 130 255 148 260 180 320 210 335 260 338 310 360 330 410 330 428 355 410 415 455 440 480 475 482 520 525 600" />
            <path d="M535 610L578 700 575 750 535 860 590 940 610 1010 650 1075M1245 130L1275 180 1310 240 1325 315 1375 332 1415 355 1420 395 1460 425 1515 525 1508 650 1545 740 1568 780" />
          </g>
        </g>

        <!-- sea -->
        <use href="#sea" fill="#c7e29e" />
        <g clip-path="url(#seaclip)"><use href="#sea" fill="none" stroke="#b4d880" stroke-width="16" filter="url(#inner)" /></g>
        <g fill="none" stroke="#eaf5d9" stroke-width="2.2">
          <path d="M979 1380L1004 1342M1374 1206L1398 1205M1395 1200L1400 1209M1471 1201L1490 1202 1498 1190M1361 1196V1205M1443 1197V1202M1171 1240V1250" />
          <path stroke="#eaffc9" stroke-width="4" d="M996 1340L1030 1300M1311 1196L1350 1192M1397 1198L1442 1192M1498 1189L1530 1185M1205 1213L1225 1205" />
        </g>

        <!-- white secondary roads -->
        <g v-for="k in ['casing', 'fill']" :key="k" :class="['local', k]">
          <g transform="translate(0 800) scale(.38265 .33333)"><path d="M1085 0L1100 30 1130 25 1155 30 1195 30 1205 60M1257 85L1275 80 1310 110 1305 185 1325 210 1328 245 1360 280 1385 290 1400 325 1430 330 1475 325 1510 325 1568 330" /></g>
          <g transform="translate(600 690) scale(.38265 .33333)"><path d="M0 655L20 650 30 680 25 710 48 750 35 830 20 855 45 920 45 990M10 1025L15 1080 30 1120 35 1165 70 1168 75 1200" /></g>
          <g transform="translate(600 1050) scale(.38265 .33333)"><path d="M20 0L35 80 70 90 95 160 60 215 20 310 25 340 70 345 75 400 90 440 92 510 160 590 175 630 205 640 230 680 290 720 400 745 480 910 495 970M285 690L455 605 455 575 640 630 690 622M515 345L600 335 650 290 695 258 735 290 825 300 842 270 860 300 905 325 945 322 955 350 950 385 955 460 980 485 985 620 992 750M520 345L560 430 610 490 680 610 690 640 765 790 770 860 785 900M0 590L55 550 105 530" /></g>
          <g transform="translate(1200 540) scale(.38265 .33333)"><path d="M1115 210L1105 165 1115 145M1085 250Q1045 280 1030 310 1010 340 985 305 962 275 940 310 920 335 920 350L930 380 935 430Q895 480 925 500 975 520 963 545 930 590 945 640 990 680 970 702 950 710 930 695 890 760 905 765 970 770 955 800L968 850V1000Q960 1020 920 1065L900 1200 860 1260" /></g>
          <g transform="translate(1200 950) scale(.38265 .33333)"><path d="M885 0L830 65 770 90 710 145 625 195 618 230 625 290 640 360 645 420 665 470 660 560 655 640M290 635L295 600 345 575 385 515 450 460 490 460 545 475 600 490 660 512M640 358H668V375" /></g>
        </g>
        <g v-for="k in ['casing', 'fill']" :key="'n' + k" :class="['local', 'narrow', k]">
          <g transform="translate(0 1150) scale(.38265 .33333)"><path d="M1568 290L1510 288 1475 250 1475 225 1500 200 1495 140 1450 108 1415 110 1385 150 1345 158 1322 195 1320 240 1285 270 1300 330 1375 355 1420 420 1448 470 1450 580 1525 905" /></g>
          <g transform="translate(600 690) scale(.38265 .33333)"><path d="M1075 30L1070 55M1025 90L1035 130 1000 180 985 230 1010 275 1020 315 1005 360 965 375 960 420 1005 445 980 470V505L1000 525 975 580 1010 620 1005 650 1040 675 1010 720M990 755V790L955 800 975 840 1015 840 1030 880 975 940 980 990 970 1040 990 1085M1010 1130L1000 1200" /></g>
          <g transform="translate(600 1050) scale(.38265 .33333)"><path d="M1005 40L1020 190 1025 250 1055 320 1090 340 1140 410 1200 480 1230 520 1340 540" /></g>
          <g transform="translate(1200 540) scale(.38265 .33333)"><path d="M1150 200L1145 270 1185 350 1210 380 1180 430 1145 480 1115 485 1115 530 1080 545 1020 535 1005 560V610L1030 680 1015 725 960 745 985 820M985 860L995 885 970 940 945 1000 905 1055 912 1090M1120 150L1135 175 1155 160 1150 200" /></g>
        </g>

        <!-- highways -->
        <g v-for="k in ['casing', 'fill']" :key="'a' + k" :class="['trunk', k]">
          <g transform="translate(600 1050) scale(.38265 .33333)"><path d="M222 1145L395 990Q425 965 500 955L790 895 905 862Q930 845 950 810L1045 680Q1075 600 1070 520L1050 400Q1040 330 1070 305L1180 240Q1220 210 1290 225M1050 680Q1110 665 1150 645L1235 605 1400 520 1568 420" /></g>
          <g transform="translate(1200 950) scale(.38265 .33333)"><path d="M0 715L90 680 200 640H480Q510 640 530 655L600 698 650 680 780 672H950L985 655" /></g>
        </g>
        <g v-for="k in ['casing', 'fill']" :key="'m' + k" :class="['motorway', k]">
          <g transform="translate(0 1150) scale(.38265 .33333)"><path d="M-10 930C80 940 150 930 200 840C280 700 380 620 550 630C650 640 700 685 780 686C900 685 950 610 1010 520C1070 420 1150 350 1260 356C1350 360 1400 380 1470 345Q1530 315 1568 311" /></g>
          <g transform="translate(600 1050) scale(.38265 .33333)"><path d="M0 611Q90 605 130 580L190 545Q250 500 290 400C310 310 360 280 410 225C440 190 470 120 495 90C530 30 600 -30 740 -50C830 -45 850 -20 960 -45C1080 -50 1140 0 1200 75C1250 200 1290 270 1380 278Q1500 275 1568 260" /></g>
          <g transform="translate(1200 950) scale(.38265 .33333)"><path d="M-4 558Q70 548 110 532L180 495Q195 490 300 488C370 480 400 435 480 428L630 388C680 380 700 410 760 411C800 408 830 385 940 377C1010 365 1030 295 1120 295C1250 298 1240 425 1360 436H1470Q1520 436 1575 490M830 400C900 410 910 520 940 600C980 700 1060 700 1130 725L1220 755C1260 765 1265 720 1300 724H1500Q1540 722 1575 735" /></g>
        </g>
        <path d="M711 1183Q700 1220 674 1232M242 1366L286 1378" fill="none" stroke="#e3f8bd" stroke-width="1.4" />

        <g v-for="b in badges" :key="b.x + '-' + b.y" :class="['badge', b.kind]">
          <rect :x="b.x - badgeWidth(b.t) / 2" :y="b.y - 6" :width="badgeWidth(b.t)" height="12" />
          <text :x="b.x" :y="b.y + 3.3" :textLength="badgeWidth(b.t) - 6" lengthAdjust="spacingAndGlyphs">{{ b.t }}</text>
        </g>

        <g v-for="f in flags" :key="f[0]" :transform="`translate(${f[0]} ${f[1]})`">
          <circle r="6.6" fill="#fff" />
          <path d="M-3-4H3M0-4Q-3-1 0 1 2 3-2 4M-2-1V4M2 4H3.4" fill="none" stroke="#8cc152" stroke-width="1.1" />
        </g>
        <g transform="translate(268 1280.5)">
          <circle r="6.4" fill="#fff" />
          <path d="M-3.4 3.2L2.4-2.6M-.6-3.2H2.6V.6M-3.8-1.4H-2.6M1 2L3.4 3.6" fill="none" stroke="#8a9186" stroke-width="1.1" />
        </g>
        <g v-for="p in hotels" :key="p[0]" :transform="`translate(${p[0]} ${p[1]})`">
          <circle r="6.4" fill="#fff" />
          <path d="M-3.8-2.4V2.6M-3.8 1.3H3.8M3.8-.6V2.6" fill="none" stroke="#8a9186" stroke-width="1" />
          <path d="M-1-1.4H3.8V.8H-1ZM-3-1.2H-1.6V.3H-3Z" fill="#8a9186" />
        </g>
        <text v-for="l in labels" :key="l.t + l.y" :x="l.x" :y="l.y" :textLength="l.w" lengthAdjust="spacingAndGlyphs" :font-size="l.s ?? 11.8" :transform="`rotate(${l.r ?? 0} ${l.x} ${l.y})`" :class="['label', l.c]">{{ l.t }}</text>
        <template v-for="c in curved" :key="c.id">
          <path :id="c.id" :d="c.d" fill="none" />
          <text class="label slanted" :font-size="c.s"><textPath :href="'#' + c.id" :textLength="c.w" lengthAdjust="spacingAndGlyphs">{{ c.t }}</textPath></text>
        </template>

        <circle cx="923" cy="1020" r="38" fill="#000" opacity=".08" filter="url(#blur)" />
        <path d="M923 1072C919 1050 896 1036 896 1017A27 27 0 0 1 950 1017C950 1036 927 1050 923 1072Z" fill="#aade5d" stroke="#e9f7d4" stroke-width="1" />
        <circle cx="922.6" cy="1017" r="12" fill="#e1e3de" stroke="#f7fbef" stroke-width="1.4" />
      </g>

      <path d="M0 0H1800V575L0 891.5Z" fill="#000" fill-opacity=".065" />
      <path d="M0 0H1800V559.5L0 876Z" fill="#acdf62" />
      <path d="M3 1551.5L1800 1236V1250.6L3 1567Z" fill="#ebebeb" />
      <path d="M0 2177L1800 1861V2516H0Z" fill="#626262" />
      <path d="M0 2192L1800 1876V2516H0Z" fill="#515151" />
    </svg>

    <header class="hero">
      <div class="brand">
        <svg class="logo" width="50" height="62" viewBox="0 0 50 62">
          <text x="-.4" y="25.7" textLength="51" lengthAdjust="spacingAndGlyphs">QU</text>
          <text x="2" y="53.7" textLength="48" lengthAdjust="spacingAndGlyphs">SQ</text>
        </svg>
        <span v-fit="146" class="upright tagline">Unique&nbsp; Portfolio</span>
      </div>
      <div class="intro">
        <h1>
          <span v-for="(line, i) in headline" :key="i" class="line"><span v-for="w in line" :key="w.t" v-fit="w.w" :class="['word', { dark: w.dark }]">{{ w.t }}</span></span>
        </h1>
        <h2><span v-for="w in subline" :key="w.t" v-fit="w.w" :class="['word', { dark: w.dark }]">{{ w.t }}</span></h2>
        <p>
          <span class="line"><span v-fit="944.5" class="word">Whether you want to just say Hi, ask for quote or follow me online,</span></span>
          <span class="line"><span v-fit="616.5" class="word">here you will find all necessary information.</span></span>
        </p>
      </div>
      <nav class="menu">
        <svg width="21" height="18" viewBox="0 0 21 18"><path d="M0 0H21V3.6H0ZM0 7H21V10.6H0ZM0 14H21V17.6H0Z" fill="#fff" /></svg>
        <span v-fit="49.5" class="upright">Menu</span>
      </nav>
    </header>

    <main class="contact">
      <ul class="details">
        <li>
          <div class="copy">
            <span v-fit="90" class="word">La Concha</span><br>
            <span v-fit="204" class="word">Sierra Blanca (Marbella)</span><br>
            <span v-fit="110" class="word">Spain 98765</span>
          </div>
          <svg width="24" height="30" viewBox="0 0 24 30"><path d="M12.2 11L20.2 17.4V24.3H14.1V19.2H10.3V24.3H4.4V17.4Z" /><path d="M12.2 6.6L16.3 9.9V7.1H19.8V12.6L23 15.2 21.7 16.6 12.2 8.9 2.8 16.6 1.5 15.2Z" /></svg>
        </li>
        <li>
          <div class="copy"><span v-fit="160" class="word">+421 987 654 321</span></div>
          <svg width="24" height="30" viewBox="0 0 24 30"><path d="M5.4 5C6.8 4.2 7.9 4 8.6 5.2L10.4 9C10.7 10 8.7 11.2 8.5 11.9 8.2 13 12.9 17.7 14.2 17.8 15 17.8 16.3 15.5 17.3 16L22 18.7C23.4 19.6 22.7 20.9 21.8 22 20.7 23.4 18.3 23.7 16.5 23 10.2 20.7 5.4 16 4 9.9 3.5 8 3.8 6 5.4 5Z" /></svg>
        </li>
        <li>
          <div class="copy"><span v-fit="176.5" class="word">qusq@ishyoboy.com</span></div>
          <svg width="24" height="30" viewBox="0 0 24 30"><path fill="none" stroke="#abdf62" stroke-width="1.7" d="M2.5 7.2H21.5Q23.1 7.2 23.1 8.8V22.7Q23.1 24.3 21.5 24.3H2.5Q.9 24.3 .9 22.7V8.8Q.9 7.2 2.5 7.2ZM1 11C4 14 9.5 19 12 19 14.5 19 20 14 23 11" /></svg>
        </li>
      </ul>
      <form class="message" @submit.prevent>
        <h3><span v-fit="310" class="word">Send a Message</span></h3>
        <label v-for="f in fields" :key="f.t" class="field" :style="{ height: f.h + 'px' }"><span v-fit="f.w" class="word">{{ f.t }}</span></label>
        <button type="submit" class="field send">
          <span v-fit="44.5" class="word">Send</span>
          <svg width="10" height="12" viewBox="0 0 10 12"><path d="M1 1.4L5 6 1 10.6M5 1.4L9 6 5 10.6" fill="none" stroke="#4f5555" stroke-width="1.3" /></svg>
        </button>
      </form>
    </main>

    <div class="social">
      <svg v-for="n in social" :key="n" :width="iconBox[n]" height="28"><use :href="'#' + n" /></svg>
    </div>

    <footer class="footer">
      <svg class="logo" width="50" height="62" viewBox="0 0 50 62">
        <text x="-.4" y="25.7" textLength="51" lengthAdjust="spacingAndGlyphs">QU</text>
        <text x="2" y="53.7" textLength="48" lengthAdjust="spacingAndGlyphs">SQ</text>
      </svg>
      <span v-fit="146" class="word name">Unique&nbsp; Portfolio</span>
      <div class="links">
        <svg v-for="n in footerSocial" :key="n" :class="{ hot: n === 'behance' }" :width="iconBox[n] * 0.76" height="21.3"><use :href="'#' + n" /></svg>
      </div>
      <div class="credits">
        <span><b v-fit="40" class="word">Qusq </b><span v-fit="46" class="word">Theme</span></span>
        <i>~</i>
        <span><span v-fit="139" class="word">Proudly Powered by </span><b v-fit="73" class="word underlined">WordPress</b></span>
        <i>~</i>
        <span><span v-fit="77" class="word">Created by </span><b v-fit="91.5" class="word">IshYoBoy.com</b></span>
      </div>
      <a class="top">
        <svg width="13" height="15" viewBox="0 0 13 15"><path d="M6.5 15V2M1 7.2L6.5 1.6 12 7.2" fill="none" stroke="#fff" stroke-width="2.3" /></svg>
        <span v-fit="102" class="upright">Back to Top</span>
      </a>
    </footer>
  </div>
</template>

<style>
body { margin: 0; }
</style>

<style scoped>
.page { position: relative; width: 1800px; height: 2516px; overflow: hidden; background: #fcfcfc; color: #4f5555; font-family: "Open Sans", "Noto Sans", sans-serif; font-size: 18px; box-sizing: border-box; }
.page * { box-sizing: border-box; }
.defs { position: absolute; }
.backdrop { position: absolute; top: 0; left: 0; width: 1800px; height: 2516px; font-family: Roboto, sans-serif; }
.backdrop path { vector-effect: non-scaling-stroke; }
.word { display: inline-block; white-space: pre; transform-origin: 0 50%; }
.line { display: block; white-space: nowrap; }
.upright { writing-mode: vertical-rl; transform: rotate(180deg); white-space: pre; line-height: 24px; font-weight: 500; }

.urban { fill: #eaede5; }
.golf { fill: #d9e0d1; }
.streams { fill: none; stroke: #dde8c3; stroke-width: 1; stroke-linejoin: round; }
.lanes { fill: none; stroke: #e1e5db; stroke-width: .9; stroke-linejoin: round; }
.water { fill: #b9dc84; }
.river { fill: none; stroke: #b5dc80; stroke-width: 2.2; stroke-linejoin: round; }
.local, .trunk, .motorway { fill: none; stroke-linejoin: round; stroke-linecap: butt; }
.local.casing { stroke: #dcdfd7; stroke-width: 4; }
.local.fill { stroke: #fff; stroke-width: 2.6; }
.local.narrow.casing { stroke-width: 3.2; }
.local.narrow.fill { stroke-width: 1.7; }
.trunk.casing { stroke: #b2df75; stroke-width: 5.6; }
.trunk.fill { stroke: #cdf98b; stroke-width: 4; }
.motorway.casing { stroke: #98d648; stroke-width: 5.8; }
.motorway.fill { stroke: #aae951; stroke-width: 4.4; }
.badge text { fill: #fff; font-size: 9px; font-weight: 700; text-anchor: middle; }
.badge.major rect { fill: #84ad4e; }
.badge.minor rect { fill: #9dba7b; }
.badge.pale rect { fill: #c8fb7c; stroke: #a5dd5a; stroke-width: 1; }
.badge.pale text { fill: #6b8a4b; }
.label { fill: #80956b; stroke: #f4f7f0; stroke-width: 2px; paint-order: stroke; stroke-linejoin: round; }
.label.olive { fill: #7f9a58; }
.label.grey { fill: #7a8178; }
.label.city { letter-spacing: 1px; font-weight: 500; }
.label.slanted { fill: #879a76; font-style: italic; stroke-width: 1.5px; stroke-opacity: .6; }

.hero { position: relative; display: flex; height: 1194px; padding-left: 276px; color: #fff; }
.brand { display: flex; flex-direction: column; width: 123px; padding-top: 96px; }
.logo { display: block; flex: none; overflow: visible; }
.logo text { fill: #fff; font-size: 31px; font-weight: 700; }
.tagline { margin: 45px 0 0 10px; align-self: flex-start; }
.intro { width: 1088.5px; padding-top: 182px; }
h1, h2, h3, p { margin: 0; font-weight: 400; }
h1 { font-size: 88px; line-height: 100px; filter: url(#soften); }
h1 .line { height: 100px; }
h2 { margin-top: 22px; height: 70px; font-size: 57px; line-height: 70px; white-space: nowrap; filter: url(#soften-small); }
.dark { color: #515151; }
p { margin-top: 32px; font-size: 29px; line-height: 39.5px; color: #515151; }
p .line { height: 39.5px; }
.menu { display: flex; flex-direction: column; align-items: center; padding-top: 104px; }
.menu .upright { margin: 47px 3px 0 0; }
.menu svg, .top svg { flex: none; }

.contact { position: relative; display: flex; height: 640px; padding-left: 494px; }
.details { width: 300px; margin: 0; padding: 312px 0 0; list-style: none; }
.details li { display: flex; justify-content: space-between; margin-bottom: 37px; line-height: 30px; }
.details li:nth-child(2) { margin-bottom: 47px; }
.details svg { display: block; fill: #abdf62; }
.copy { width: 249px; text-align: right; }
.message { width: 480px; margin-left: 125px; }
h3 { height: 50px; margin: 1px 0 49px; font-size: 40px; line-height: 50px; color: #515151; }
.field { display: block; width: 480px; padding-top: 14px; border-top: 1px solid #333; line-height: 24px; }
.send { display: flex; align-items: center; gap: 8px; padding-left: 0; padding-bottom: 0; border-width: 1px 0 0; background: none; color: inherit; font: inherit; line-height: 24px; }

.social { position: relative; display: flex; gap: 78.6px; width: 546px; height: 28px; margin-left: 627px; fill: #4f5555; color: #4f5555; }
.social svg, .links svg { display: block; flex: none; overflow: visible; }

.footer { position: relative; display: flex; flex-direction: column; align-items: center; margin-top: 294px; height: 360px; }
.name { margin-top: 39px; line-height: 24px; color: #fff; font-weight: 500; }
.links { display: flex; gap: 57.2px; margin-top: 46px; fill: #b3b3b3; color: #b3b3b3; }
.links .hot { fill: #f62f79; color: #f62f79; }
.credits { display: flex; justify-content: space-between; width: 555px; margin-top: 44px; font-size: 13.6px; line-height: 20px; color: #b0b0b0; white-space: nowrap; }
.credits b { color: #fff; font-weight: 500; }
.credits i { font-style: normal; }
.underlined { box-shadow: 0 2px 0 #f62f79; }
.top { position: absolute; top: 85px; left: 1488px; display: flex; flex-direction: column; align-items: center; width: 25px; color: #fff; }
.top .upright { margin: 51px 3px 0 0; }
</style>
